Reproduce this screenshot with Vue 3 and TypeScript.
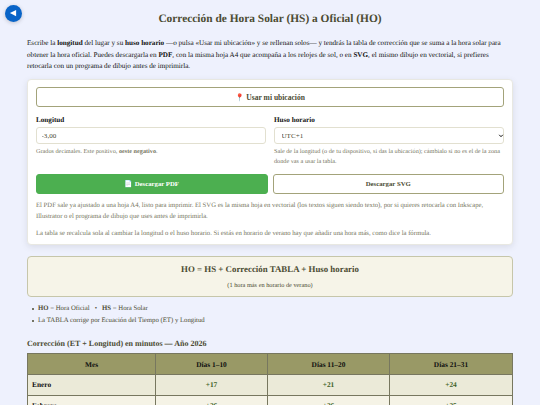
<template>
  <div class="page">
    <button class="back" type="button" aria-label="Volver">
      <svg viewBox="0 0 18 18"><path d="M5.2 8.6 L11.8 5.2 V12 Z" fill="#fff" /></svg>
    </button>

    <h1>Corrección de Hora Solar (HS) a Oficial (HO)</h1>

    <p class="intro">
      Escribe la <b>longitud</b> del lugar y su <b>huso horario</b> —o pulsa «Usar mi ubicación» y se rellenan solos— y
      tendrás la tabla de corrección que se suma a la hora solar para<br />
      obtener la hora oficial. Puedes descargarla en <b>PDF</b>, con la misma hoja A4 que acompaña a los relojes de
      sol, o en <b>SVG</b>, el mismo dibujo en vectorial, si prefieres<br />
      retocarla con un programa de dibujo antes de imprimirla.
    </p>

    <section class="card">
      <button class="btn locate" type="button">📍 Usar mi ubicación</button>

      <div class="fields">
        <div class="field">
          <label for="longitud">Longitud</label>
          <input id="longitud" v-model="longitud" type="text" />
          <p class="hint">Grados decimales. Este positivo, <b>oeste negativo</b>.</p>
        </div>
        <div class="field">
          <label for="huso">Huso horario</label>
          <div class="select">
            <select id="huso" v-model="huso">
              <option v-for="h in husos" :key="h" :value="h">{{ h }}</option>
            </select>
            <svg viewBox="0 0 6 4"><path d="M1.2 0.8 L3 2.7 L4.8 0.8" fill="none" stroke="#111" stroke-width="1" /></svg>
          </div>
          <p class="hint">
            Sale de la longitud (o de tu dispositivo, si das la ubicación); cámbialo si no es el de la zona<br />
            donde vas a usar la tabla.
          </p>
        </div>
      </div>

      <div class="actions">
        <button class="btn primary" type="button">📄 Descargar PDF</button>
        <button class="btn" type="button">Descargar SVG</button>
      </div>

      <p class="note">
        El PDF sale ya ajustado a una hoja A4, listo para imprimir. El SVG es la misma hoja en vectorial (los textos
        siguen siendo texto), por si quieres retocarla con Inkscape,<br />
        Illustrator o el programa de dibujo que uses antes de imprimirla.
      </p>
      <p class="note">
        La tabla se recalcula sola al cambiar la longitud o el huso horario. Si estás en horario de verano hay que
        añadir una hora más, como dice la fórmula.
      </p>
    </section>

    <div class="formula">
      <strong>HO = HS + Corrección TABLA + Huso horario</strong>
      <span>(1 hora más en horario de verano)</span>
    </div>

    <ul>
      <li><b>HO</b> = Hora Oficial &nbsp; • &nbsp; <b>HS</b> = Hora Solar</li>
      <li>La TABLA corrige por Ecuación del Tiempo (ET) y Longitud</li>
    </ul>

    <h2>Corrección (ET + Longitud) en minutos — Año 2026</h2>

    <table>
      <thead>
        <tr>
          <th>Mes</th>
          <th>Días 1–10</th>
          <th>Días 11–20</th>
          <th>Días 21–31</th>
        </tr>
      </thead>
      <tbody>
        <tr v-for="fila in filas" :key="fila.mes">
          <td>{{ fila.mes }}</td>
          <td v-for="(valor, i) in fila.valores" :key="i">{{ valor }}</td>
        </tr>
      </tbody>
    </table>
  </div>
</template>

<script setup lang="ts">
import { ref } from 'vue';

interface Fila {
  mes: string;
  valores: string[];
}

const longitud = ref('-3,00');
const huso = ref('UTC+1');
const husos = ['UTC-1', 'UTC+0', 'UTC+1', 'UTC+2'];

const filas: Fila[] = [
  { mes: 'Enero', valores: ['+17', '+21', '+24'] },
  { mes: 'Febrero', valores: ['+26', '+26', '+25'] },
];
</script>

<style>
body {
  background: #eef1fd;
  overflow: hidden;
}
</style>

<style scoped>
.page {
  box-sizing: border-box;
  height: 405px;
  overflow: hidden;
  padding: 11px 27px 0;
  background: #eef1fd;
  font-family: 'Liberation Serif', 'Times New Roman', serif;
  font-size: 7.17px;
  color: #111;
  text-rendering: geometricPrecision;
}

.page * {
  box-sizing: border-box;
}

.back {
  position: absolute;
  top: 5px;
  left: 5px;
  width: 17px;
  height: 17px;
  padding: 0;
  border: 0;
  border-radius: 50%;
  background: #0864c8;
  box-shadow: 0 1px 4px rgba(0, 0, 0, 0.2);
}

.back svg {
  display: block;
  width: 17px;
  height: 17px;
}

h1 {
  margin: 0;
  font-size: 11.4px;
  line-height: 16px;
  text-align: center;
  color: #4b4b32;
}

p {
  margin: 0;
  white-space: nowrap;
}

.intro {
  margin-top: 11px;
  line-height: 11.5px;
}

.card {
  height: 166px;
  margin-top: 6.5px;
  padding: 6.5px 8px;
  border: 1px solid #e8e8e2;
  border-radius: 4px;
  background: #fff;
  box-shadow: 0 2px 7px rgba(0, 0, 0, 0.09);
}

.btn {
  display: block;
  width: 100%;
  height: 20px;
  padding: 0;
  border: 1px solid #a3a37a;
  border-radius: 3px;
  background: #fff;
  font: bold 6.75px 'Liberation Serif', 'Noto Color Emoji', serif;
  color: #4b4b32;
}

.btn.locate {
  padding-top: 1px;
  font-size: 7.55px;
}

.btn.primary {
  border-color: #4caf50;
  background: #4caf50;
  color: #fff;
}

.fields,
.actions {
  display: grid;
  grid-template-columns: 1fr 1fr;
}

.fields {
  gap: 8px;
  height: 60px;
  margin-top: 7px;
}

label {
  display: block;
  height: 13px;
  line-height: 13px;
  font-weight: bold;
}

input,
select {
  display: block;
  width: 100%;
  height: 17.5px;
  padding: 1px 4.5px 0;
  border: 1px solid #e2e0d0;
  border-radius: 3px;
  background: #fff;
  font: 7.1px 'Liberation Serif', serif;
  color: #4b4b32;
  appearance: none;
}

select {
  padding-left: 6.5px;
}

.select {
  position: relative;
}

.select svg {
  position: absolute;
  top: 7px;
  right: 0.5px;
  width: 6px;
  height: 4px;
}

.hint {
  margin-top: 2.8px;
  font-size: 6.22px;
  line-height: 10px;
  color: #77775f;
}

.actions {
  gap: 5px;
}

.note {
  margin-top: 6px;
  font-size: 6.7px;
  line-height: 11px;
  color: #77775f;
}

.formula {
  display: flex;
  flex-direction: column;
  align-items: center;
  height: 41px;
  margin-top: 10.5px;
  padding-top: 5.5px;
  border: 1px solid #c6c6aa;
  border-radius: 4px;
  background: #f6f4e8;
  color: #4b4b32;
}

.formula strong {
  font-size: 8.85px;
  line-height: 14px;
}

.formula span {
  margin-top: 5px;
  font-size: 6.3px;
  line-height: 10px;
}

ul {
  margin: 6px 0 0;
  padding: 0 0 0 4.5px;
  list-style: none;
  font-size: 6.75px;
  line-height: 12.5px;
  color: #4b4b32;
}

li {
  display: flex;
  align-items: center;
  white-space: pre;
}

li::before {
  content: '';
  width: 2px;
  height: 2px;
  margin-right: 4.5px;
  border-radius: 50%;
  background: #4b4b32;
}

h2 {
  margin: 10px 0 0;
  font-size: 8px;
  line-height: 12px;
  color: #4b4b32;
}

table {
  width: 486px;
  margin-top: 3px;
  border-collapse: collapse;
  table-layout: fixed;
  font-size: 7.4px;
  font-weight: bold;
}

th,
td {
  height: 21px;
  padding: 0 4px;
  border: 1px solid #77775f;
  text-align: center;
}

th {
  padding-top: 1px;
  background: #999966;
}

th:first-child {
  width: 128px;
}

th:nth-child(2) {
  width: 112px;
}

th:nth-child(3) {
  width: 122px;
}

td {
  color: #3f6226;
}

td:first-child {
  text-align: left;
  color: #111;
}

tbody tr:nth-child(odd) {
  background: #ebead8;
}

tbody tr:nth-child(even) {
  background: #f5f3e6;
}
</style>
